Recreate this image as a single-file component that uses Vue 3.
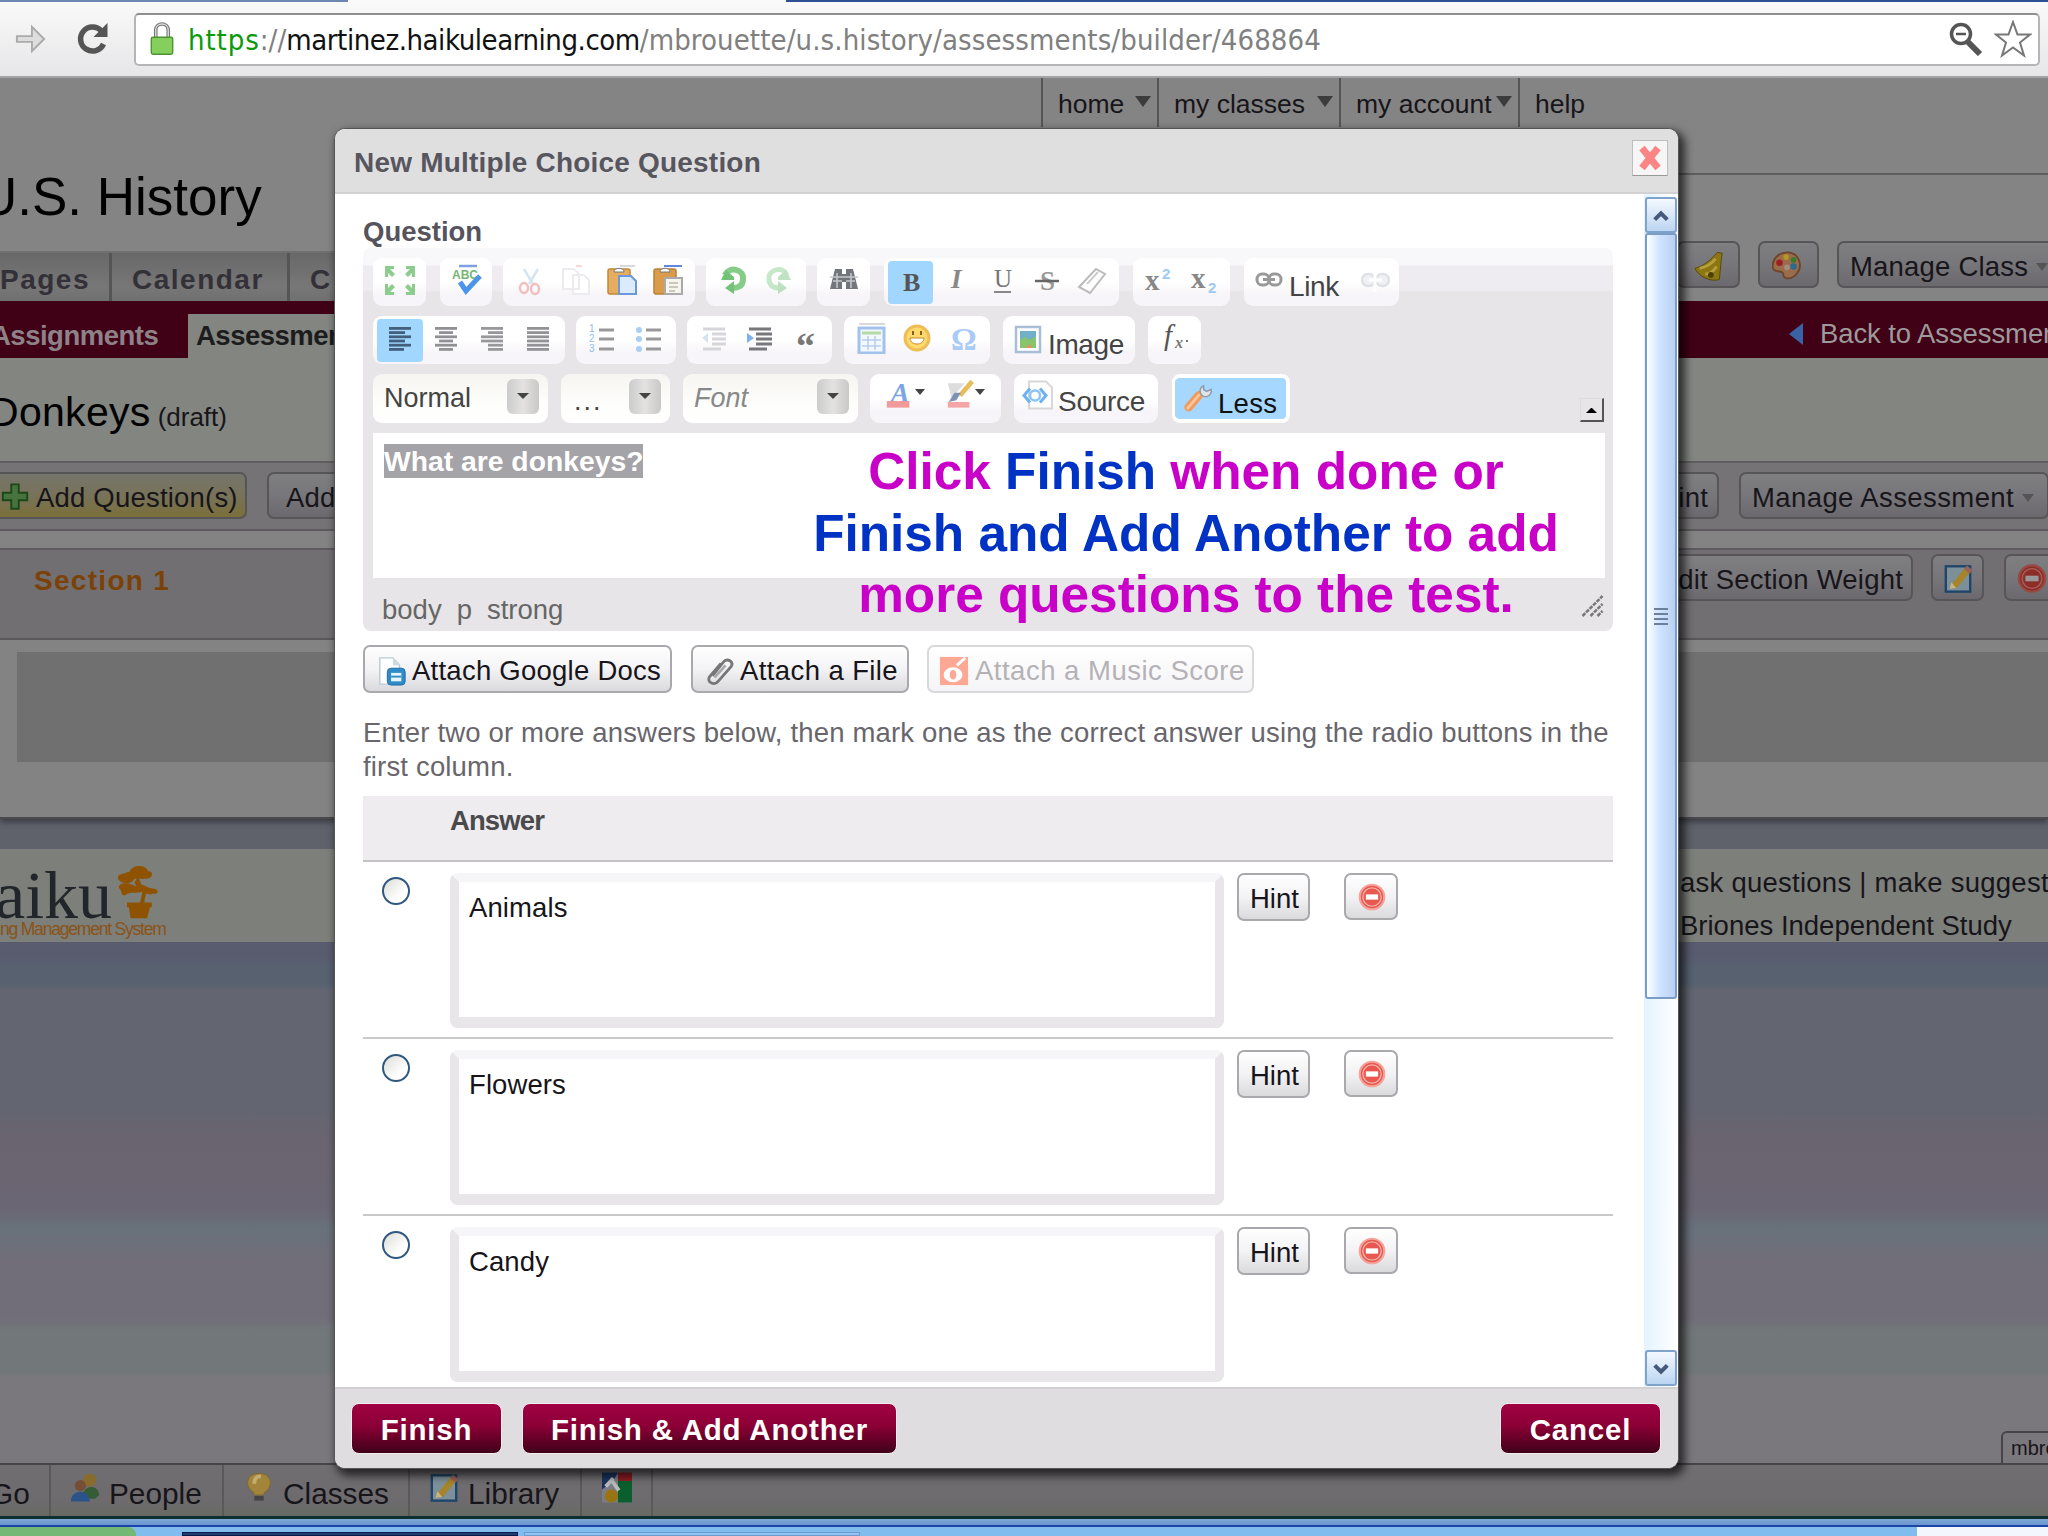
<script setup>
import { ref } from 'vue'

const nav = [
  { label: 'home', menu: true, w: 116 },
  { label: 'my classes', menu: true, w: 182 },
  { label: 'my account', menu: true, w: 179 },
  { label: 'help', menu: false, w: 120 }
]

// w = group width, gap = space after the group
const toolRows = [
  [
    { w: 53, gap: 14, items: ['maximize'] },
    { w: 52, gap: 11, items: ['spell'] },
    { w: 192, gap: 11, items: ['cut', 'copy', 'paste', 'pasteText'] },
    { w: 100, gap: 11, items: ['undo', 'redo'] },
    { w: 53, gap: 14, items: ['find'] },
    { w: 235, gap: 14, items: ['bold', 'italic', 'underline', 'strike', 'eraser'], on: 'bold' },
    { w: 97, gap: 14, items: ['sup', 'sub'] },
    { w: 155, gap: 0, items: ['link', 'unlink'], label: 'Link' }
  ],
  [
    { w: 192, gap: 11, items: ['left', 'center', 'right', 'justify'], on: 'left' },
    { w: 100, gap: 11, items: ['ol', 'ul'] },
    { w: 145, gap: 12, items: ['outdent', 'indent', 'quote'] },
    { w: 146, gap: 13, items: ['table', 'smiley', 'omega'] },
    { w: 132, gap: 13, items: ['image'], label: 'Image' },
    { w: 53, gap: 0, items: ['formula'] }
  ]
]

const selects = [
  { text: 'Normal', w: 175, gap: 13 },
  { text: '...', w: 109, gap: 13, dots: true },
  { text: 'Font', w: 175, gap: 12, italic: true }
]

const answers = ref(['Animals', 'Flowers', 'Candy'])

const lines = (rows) => rows.map(([x, w], i) => `<rect x="${x}" y="${5 + i * 4.2}" width="${w}" height="2.8"/>`).join('')

const icons = {
  maximize: '<g fill="#8ccc8c"><path d="M1 2h9v3H6l5 5-3 3-4-4v4H1zM31 2h-9v3h4l-5 5 3 3 4-4v4h3zM1 31h9v-3H6l5-5-3-3-4 4v-4H1zM31 31h-9v-3h4l-5-5 3-3 4 4v-4h3z"/></g>',
  spell: '<path d="M9 2h18" stroke="#7f9fe0" stroke-width="2.5"/><text x="2" y="15" font-size="12" font-weight="bold" font-family="Liberation Sans" fill="#74b574">ABC</text><path d="M10 18l6 9 14-15" fill="none" stroke="#4b95ea" stroke-width="5"/>',
  cut: '<g fill="none" stroke-width="2.5"><path d="M10 5l9 15M24 5l-9 15" stroke="#d3e6f2"/><ellipse cx="10" cy="24" rx="4" ry="5" stroke="#f2bebe"/><ellipse cx="21" cy="25" rx="4" ry="5" stroke="#f2bebe"/></g>',
  copy: '<g fill="#fff" stroke="#ecebf0" stroke-width="2"><path d="M3 5h11l5 5v15H3zM13 11h11l5 5v14H13z"/></g><path d="M16 2h6" stroke="#f5d7d7" stroke-width="2"/>',
  paste: '<path d="M14 2h15" stroke="#ccc" stroke-width="1.5"/><rect x="2" y="5" width="22" height="25" rx="2" fill="#e5ad60" stroke="#c28737" stroke-width="1.5"/><path d="M8 8c0-5 10-5 10 0z" fill="#fff" stroke="#777"/><path d="M13 12h12l5 5v13H13z" fill="#dbeaff" stroke="#6d98d8" stroke-width="2"/>',
  pasteText: '<path d="M12 2h18" stroke="#6188dc" stroke-width="2"/><rect x="2" y="5" width="22" height="25" rx="2" fill="#d99c4d" stroke="#bb8034" stroke-width="1.5"/><path d="M8 8c0-5 10-5 10 0z" fill="#fff" stroke="#777"/><path d="M13 14h17v16H13z" fill="#f7f6ee" stroke="#aaa" stroke-width="2"/><path d="M17 19h9M17 23h9M17 27h6" stroke="#b9b9b0" stroke-width="1.6"/>',
  undo: '<path d="M8 11c4-9 19-6 18 4 0 7-5 9-10 9" fill="none" stroke="#85cc88" stroke-width="6"/><path d="M4 16h13V13l-8-7zM17 17v13l-9-6z" fill="#74c179"/>',
  redo: '<g opacity=".45"><path d="M24 11c-4-9-19-6-18 4 0 7 5 9 10 9" fill="none" stroke="#85cc88" stroke-width="5"/><path d="M28 16H15V13l8-7zM15 17v13l9-6z" fill="#74c179"/></g>',
  find: '<g fill="#72757c"><path d="M7 5h7v5h4V5h7l5 20h-12v-7h-4v7H2z"/></g><path d="M5 17h9M18 17h9M9 9v15M23 9v15M2 13h28" stroke="#c5c7cc" stroke-width="1.5"/>',
  bold: '<text x="8" y="27" font-size="26" font-weight="bold" font-family="Liberation Serif" fill="#555">B</text>',
  italic: '<text x="11" y="24" font-size="27" font-weight="bold" font-style="italic" font-family="Liberation Serif" fill="#888">I</text>',
  underline: '<text x="8" y="23" font-size="25" font-family="Liberation Serif" fill="#777">U</text><path d="M8 28h17" stroke="#888" stroke-width="2"/>',
  strike: '<text x="9" y="26" font-size="27" font-weight="bold" font-family="Liberation Serif" fill="#999">S</text><path d="M4 17h24" stroke="#666" stroke-width="2.5"/>',
  eraser: '<path d="M3 23L20 5l9 5-15 19z" fill="#fff" stroke="#bbb" stroke-width="2"/><path d="M11 20L22 8" stroke="#ccc" stroke-width="2"/>',
  sup: '<text x="2" y="26" font-size="29" font-weight="bold" font-family="Liberation Serif" fill="#888">x</text><text x="19" y="15" font-size="15" font-weight="bold" font-family="Liberation Sans" fill="#9acbf5">2</text>',
  sub: '<text x="3" y="24" font-size="29" font-weight="bold" font-family="Liberation Serif" fill="#888">x</text><text x="20" y="29" font-size="15" font-weight="bold" font-family="Liberation Sans" fill="#9acbf5">2</text>',
  link: '<g fill="none" stroke="#999" stroke-width="3"><rect x="4" y="10" width="12" height="11" rx="5"/><rect x="16" y="10" width="12" height="11" rx="5"/><path d="M10 15.500h12"/></g>',
  unlink: '<g fill="#f0f1f4" stroke="#dfe1e5" stroke-width="2.5"><rect x="3" y="10" width="13" height="12" rx="6"/><rect x="17" y="10" width="13" height="12" rx="6"/></g><path d="M16 5v23M10 16h13" stroke="#fff" stroke-width="3"/>',
  left: `<g fill="#42607c">${lines([[5, 22], [5, 16], [5, 22], [5, 16], [5, 22], [5, 15]])}</g>`,
  center: `<g fill="#919195">${lines([[5, 22], [9, 14], [5, 22], [9, 14], [5, 22], [9, 14]])}</g>`,
  right: `<g fill="#98989c">${lines([[5, 22], [12, 15], [5, 22], [5, 22], [12, 15], [12, 15]])}</g>`,
  justify: `<g fill="#939397">${lines([[5, 22], [5, 22], [5, 22], [5, 22], [5, 22], [5, 22]])}</g>`,
  ol: '<g stroke="#999" stroke-width="3"><path d="M12 8h15M12 17h15M12 27h15"/></g><g font-size="10" font-family="Liberation Sans" fill="#8ebdf0"><text x="2" y="10">1</text><text x="2" y="20">2</text><text x="2" y="30">3</text></g>',
  ul: '<g stroke="#999" stroke-width="3"><path d="M13 8h15M13 17h15M13 27h15"/></g><g fill="#a9cff5"><circle cx="6" cy="8" r="3"/><circle cx="6" cy="17" r="3"/><circle cx="6" cy="27" r="3"/></g>',
  outdent: '<g stroke="#d6d6da" stroke-width="3"><path d="M5 7h22M14 12h14M14 17h14M14 22h14M5 27h18"/></g><path d="M10 11v10l-6-5z" fill="#d5e2ef"/>',
  indent: '<g stroke="#77777c" stroke-width="3"><path d="M5 7h22M12 12h16M12 17h16M12 22h16M5 27h18"/></g><path d="M3 11v10l7-5z" fill="#7bb3ee"/>',
  quote: '<text x="7" y="37" font-size="38" font-weight="bold" font-family="Liberation Serif" fill="#777">“</text>',
  table: '<path d="M4 2h26" stroke="#ccc" stroke-width="1.5"/><rect x="4" y="6" width="25" height="25" fill="#f3f8ff" stroke="#a2c2ec" stroke-width="3"/><path d="M7 11h19" stroke="#b4dba6" stroke-width="3"/><path d="M7 18h19M7 24h19M13 14v14M20 14v14" stroke="#b9cdea" stroke-width="1.5"/>',
  smiley: '<circle cx="16" cy="16" r="12" fill="#ffd96b" stroke="#eebd58" stroke-width="3"/><path d="M9 16h14c0 8-14 8-14 0z" fill="#fff" stroke="#c08c2c"/><path d="M12 9v4M20 9v4" stroke="#85601f" stroke-width="2"/>',
  omega: '<text x="4" y="28" font-size="32" font-weight="bold" font-family="Liberation Serif" fill="#a9cbf6">Ω</text>',
  image: '<rect x="4" y="5" width="24" height="25" fill="#fff" stroke="#a8bdd6" stroke-width="2.5"/><rect x="8" y="9" width="16" height="17" fill="#87c56d"/><path d="M8 9h16v5l-6 4-5-3-5 3z" fill="#72b0c9"/><path d="M14 26l3-4 3 4z" fill="#ef8c56"/>',
  formula: '<text x="5" y="23" font-size="29" font-style="italic" font-family="Liberation Serif" fill="#555">f</text><text x="16" y="26" font-size="16" font-weight="bold" font-style="italic" font-family="Liberation Serif" fill="#777">x</text><path d="M27 19h2" stroke="#777" stroke-width="2"/>',
  color: '<text x="6" y="24" font-size="30" font-weight="bold" font-style="italic" font-family="Liberation Serif" fill="#7ba5e4">A</text><rect x="2" y="23" width="24" height="7" fill="#f29a9a"/>',
  brush: '<path d="M3 4h18L7 20z" fill="#ddd"/><path d="M29 2L16 17" stroke="#e7bd5c" stroke-width="5"/><path d="M17 14l-5 8-8 2 6-10z" fill="#7d93b5"/><rect x="3" y="24" width="23" height="6" fill="#f4a5a5"/>',
  source: '<path d="M7 2h17l6 6v21H7z" fill="#fff" stroke="#d8d8d8" stroke-width="2"/><path d="M8 9l-6 7 6 7M18 9l6 7-6 7" fill="none" stroke="#6cb1f1" stroke-width="3"/><circle cx="13" cy="16" r="5" fill="none" stroke="#8cc4f7" stroke-width="2.5"/>',
  wrench: '<path d="M17 14L6 27" stroke="#f19a5b" stroke-width="9" stroke-linecap="round"/><path d="M17 14L5 28" stroke="#fbc497" stroke-width="3" stroke-linecap="round"/><path d="M19 13l4-5" stroke="#aab4bd" stroke-width="4"/><path d="M22 4a6 6 0 1 0 8 4l-5 2-3-2z" fill="#dfe5ea" stroke="#8f9ba6" stroke-width="1.5"/>',
  gdoc: '<path d="M3 2h14l7 8v20H3z" fill="#fff" stroke="#b9cbd5" stroke-width="1.5"/><path d="M17 2l7 8h-7z" fill="#cfdbe1"/><rect x="11" y="13" width="19" height="18" rx="4" fill="#2f8bc8" stroke="#1d6ba3"/><path d="M15 18h11v9H15z" fill="#e6f4fd"/><path d="M15 22h11" stroke="#2f8bc8" stroke-width="2"/>',
  clip: '<path d="M8 21L20 6c4-4 11 0 8 5L14 27c-4 5-13 1-9-5L17 8" fill="none" stroke="#777" stroke-width="3"/><path d="M10 23L22 10" stroke="#aaa" stroke-width="3"/>',
  music: '<rect x="1" y="1" width="30" height="30" fill="#fca894"/><ellipse cx="15" cy="20" rx="10" ry="8" fill="#fff"/><ellipse cx="15" cy="20" rx="3.500" ry="5" fill="#fca894"/><path d="M19 10L28 2" stroke="#fff" stroke-width="3"/>',
  minus: '<circle cx="16" cy="16" r="14" fill="#e8584e" stroke="#f3a59d" stroke-width="2.500"/><circle cx="16" cy="16" r="10.500" fill="none" stroke="#f8b1aa" stroke-width="1.500"/><rect x="9" y="13" width="14" height="6" fill="#fff"/>',
  bell: '<path d="M25 2l5 1-1 8-2 20C17 34 4 27 1 19 9 17 17 11 22 5z" fill="#8c7614" stroke="#55470c"/><path d="M6 19c6-1 12-4 17-10M12 25c5 0 9-3 12-8" fill="none" stroke="#b7a03a" stroke-width="3"/><circle cx="18" cy="26" r="3" fill="#4d3f0a"/>',
  palette: '<path d="M16 2c13 0 17 14 11 22-6 8-15 7-15 1 0-4-9-1-11-6C-1 10 7 2 16 2z" fill="#9a6c4c" stroke="#6e442a" stroke-width="2"/><circle cx="8" cy="13" r="3.500" fill="#9c2020"/><circle cx="15" cy="7" r="3" fill="#b09a20"/><circle cx="23" cy="10" r="3" fill="#3b7a2c"/><circle cx="23" cy="17" r="3.500" fill="#2b6a93"/><circle cx="16" cy="18" r="3" fill="#a58c80"/>',
  edit: '<rect x="3" y="3" width="26" height="27" fill="#7d9099" stroke="#1d4469" stroke-width="2.500"/><path d="M26 7L12 24" stroke="#a68429" stroke-width="7"/><path d="M14 26l-7 1 2-7z" fill="#cbb381"/><path d="M24 4l6 5" stroke="#9a6259" stroke-width="5"/>',
  remove: '<circle cx="16" cy="16" r="14" fill="#8e2c28" stroke="#9a4843" stroke-width="2.500"/><circle cx="16" cy="16" r="10.500" fill="none" stroke="#a5625d" stroke-width="1.500"/><rect x="9" y="13" width="14" height="6" fill="#999"/>',
  plus: '<path d="M12 3h8v9h9v8h-9v9h-8v-9H3v-8h9z" fill="#47733f" stroke="#1d4719" stroke-width="2"/>',
  people: '<circle cx="21" cy="8" r="7" fill="#876c2e"/><path d="M13 28c0-16 18-16 18-4l-4 4z" fill="#355c35"/><circle cx="11" cy="14" r="6" fill="#754e37"/><path d="M1 31c0-14 20-14 20 0z" fill="#2a5389"/>',
  bulb: '<path d="M16 1c15 0 15 15 6 20l-1 3H11l-1-3C1 16 1 1 16 1z" fill="#a2853a" stroke="#7d672e"/><path d="M11 12c0-8 5-8 7-8" fill="none" stroke="#c3ad72" stroke-width="4"/><path d="M11 25h10v5H11z" fill="#454545"/>',
  google: '<rect width="32" height="32" fill="#7a7e84"/><path d="M17 0h15v9H17z" fill="#8d1c22"/><path d="M17 9h15v23H17z" fill="#0b5e2e"/><path d="M0 0h17l-5 9-12 9z" fill="#1c355f"/><circle cx="10" cy="25" r="7" fill="#9a7411"/><path d="M10 8l8 11M4 15l8-9" stroke="#bbb" stroke-width="4"/>',
  bonsai: '<g fill="#8f5300"><path d="M15 7c3-8 18-8 20 0 6-1 6 8-2 8H20c-4 9-18 4-18-1 0-4 5-4 7-5z"/><path d="M3 25c0-7 12-6 18-2 8-5 12 3 21 3 5 1 5 7-2 5-4 3-8-1-11-2-6 3-14-1-19 4-6 1-2-5-7-8z"/><path d="M24 12l4 10 6 4-3 13 1 4h-6l3-15-9-8zM12 41h27v5h-2l-3 12H16l-2-12h-2z"/></g>'
}
</script>

<template>
  <div class="screen">
    <header class="browser">
      <div class="tabstrip"><i></i><b></b><i></i></div>
      <div class="toolbar">
        <svg class="fwd" viewBox="0 0 32 34"><path d="M1 14h16V4l13 13-13 13V20H1z" fill="#ddd" stroke="#aaa" stroke-width="2" /></svg>
        <svg class="reload" viewBox="0 0 34 36"><path d="M28 23a12 12 0 1 1-2-13" fill="none" stroke="#555" stroke-width="5.5" /><path d="M32 2v14H18z" fill="#555" /></svg>
        <div class="address">
          <svg class="lock" viewBox="0 0 26 38"><path d="M6 18V9c0-9 14-9 14 0v9" fill="none" stroke="#777" stroke-width="4" /><path d="M6 18V9c0-9 14-9 14 0v9" fill="none" stroke="#ddd" stroke-width="1.5" /><rect x="1" y="17" width="24" height="19" rx="2" fill="#85d05d" stroke="#4c9230" stroke-width="1.5" /></svg>
          <span class="url"><em>https</em>://<strong>martinez.haikulearning.com</strong>/mbrouette/u.s.history/assessments/builder/468864</span>
          <svg class="mag" viewBox="0 0 34 34"><circle cx="12" cy="12" r="9.500" fill="#fff" stroke="#555" stroke-width="3.500" /><path d="M7 12h10" stroke="#555" stroke-width="2.500" /><path d="M19 20l12 12" stroke="#555" stroke-width="6" /></svg>
          <svg class="star" viewBox="0 0 38 38"><path d="M19 2l4.500 12.500H36l-10 8 4 13-11-8-11 8 4-13-10-8h12.500z" fill="#fff" stroke="#777" stroke-width="2" /></svg>
        </div>
      </div>
    </header>

    <main class="page">
      <nav class="topnav">
        <div v-for="n in nav" :key="n.label" class="nav-item" :style="{ width: n.w + 'px' }">
          {{ n.label }}<i v-if="n.menu"></i>
        </div>
      </nav>
      <div class="title-row">
        <h1>U.S. History</h1>
        <div class="rule"></div>
      </div>
      <div class="split tabs-row">
        <div class="tabs"><span class="t1">Pages</span><span class="t2">Calendar</span><span class="t3">C</span></div>
        <div class="right">
          <div class="btn dim bellbtn"><svg viewBox="0 0 32 32" v-html="icons.bell"></svg></div>
          <div class="btn dim palbtn"><svg viewBox="0 0 32 32" v-html="icons.palette"></svg></div>
          <div class="btn dim mclass">Manage Class <i class="caret"></i></div>
        </div>
      </div>
      <div class="split crimson">
        <div class="subtabs"><b>Assignments</b><span>Assessments</span></div>
        <div class="right back"><i></i>Back to Assessments</div>
      </div>
      <div class="heading"><h2>Donkeys</h2><span>(draft)</span></div>
      <div class="split actions">
        <div class="left">
          <div class="btn dim addq"><svg viewBox="0 0 32 32" v-html="icons.plus"></svg>Add Question(s)</div>
          <div class="btn dim adds">Add</div>
        </div>
        <div class="right">
          <div class="btn dim print">Print</div>
          <div class="btn dim massess">Manage Assessment <i class="caret"></i></div>
        </div>
      </div>
      <div class="split section">
        <h3>Section 1</h3>
        <div class="right">
          <div class="btn dim weight">Edit Section Weight</div>
          <div class="btn dim editbtn"><svg viewBox="0 0 32 32" v-html="icons.edit"></svg></div>
          <div class="btn dim delbtn"><svg viewBox="0 0 32 32" v-html="icons.remove"></svg></div>
        </div>
      </div>
      <div class="section-body"><div></div></div>
      <div class="split foot">
        <div class="logo">
          <div class="word">aiku<svg viewBox="0 0 48 60" v-html="icons.bonsai"></svg></div>
          <small>ng Management System</small>
        </div>
        <div class="right links"><p class="ask">ask questions | make suggestions</p><p>Briones Independent Study</p></div>
      </div>
      <div class="spacer"><div class="chat">mbrouette</div></div>
      <div class="dock">
        <div class="d1">Go</div>
        <div class="d2"><svg viewBox="0 0 32 32" v-html="icons.people"></svg>People</div>
        <div class="d3"><svg viewBox="0 0 32 32" v-html="icons.bulb"></svg>Classes</div>
        <div class="d4"><svg viewBox="0 0 32 32" v-html="icons.edit"></svg>Library</div>
        <div class="d5"><svg viewBox="0 0 32 32" v-html="icons.google"></svg></div>
      </div>
    </main>
    <footer class="taskbar"><i class="start"></i><i class="task on"></i><i class="task"></i><i class="tray"></i></footer>

    <section class="modal">
      <div class="modal-head">
        <span>New Multiple Choice Question</span>
        <button class="close"><svg viewBox="0 0 24 28"><path d="M4 4l16 20M20 4L4 24" stroke="#fb8585" stroke-width="7" /></svg></button>
      </div>
      <div class="modal-body">
        <div class="form">
          <label class="q-label">Question</label>
          <div class="editor">
            <div v-for="(row, r) in toolRows" :key="r" class="tool-row">
              <div v-for="(g, i) in row" :key="i" class="group" :class="{ labelled: g.label }" :style="{ width: g.w + 'px', marginRight: g.gap + 'px' }">
                <template v-for="(name, k) in g.items" :key="name">
                  <div class="tool" :class="{ on: g.on === name }"><svg viewBox="0 0 32 32" v-html="icons[name]"></svg></div>
                  <span v-if="g.label && k === 0" class="tool-label">{{ g.label }}</span>
                </template>
              </div>
            </div>
            <div class="tool-row third">
              <div v-for="s in selects" :key="s.text" class="select" :class="{ italic: s.italic, dots: s.dots }" :style="{ width: s.w + 'px', marginRight: s.gap + 'px' }">
                <span>{{ s.text }}</span><div class="drop"><i></i></div>
              </div>
              <div class="group colors">
                <svg viewBox="0 0 32 32" v-html="icons.color"></svg><i></i>
                <svg viewBox="0 0 32 32" v-html="icons.brush"></svg><i></i>
              </div>
              <div class="group source"><svg viewBox="0 0 32 32" v-html="icons.source"></svg><span>Source</span></div>
              <div class="less"><svg viewBox="0 0 32 32" v-html="icons.wrench"></svg><span>Less</span></div>
              <div class="collapse"><i></i></div>
            </div>
            <div class="content"><strong>What are donkeys?</strong></div>
            <div class="path">
              <span>body</span><span>p</span><span>strong</span>
              <svg class="grip" viewBox="0 0 24 24"><path d="M2 22L22 2M10 22L22 10M17 22l5-5" stroke="#777" stroke-width="2.500" stroke-dasharray="4 1" /></svg>
            </div>
          </div>

          <div class="attach">
            <div class="btn a1"><svg viewBox="0 0 32 32" v-html="icons.gdoc"></svg>Attach Google Docs</div>
            <div class="btn a2"><svg viewBox="0 0 32 32" v-html="icons.clip"></svg>Attach a File</div>
            <div class="btn a3"><svg viewBox="0 0 32 32" v-html="icons.music"></svg>Attach a Music Score</div>
          </div>

          <p class="hint-text">Enter two or more answers below, then mark one as the correct answer using the radio buttons in the<br>first column.</p>

          <div class="thead">Answer</div>
          <div v-for="a in answers" :key="a" class="answer">
            <div class="radio"></div>
            <div class="field">{{ a }}</div>
            <div class="btn hint">Hint</div>
            <div class="btn remove"><svg viewBox="0 0 32 32" v-html="icons.minus"></svg></div>
          </div>
        </div>
        <div class="scrollbar">
          <div class="sb-btn"><svg viewBox="0 0 20 20"><path d="M3 14l7-7 7 7" fill="none" stroke="#45597a" stroke-width="4.500" /></svg></div>
          <div class="thumb"><i></i><i></i><i></i><i></i></div>
          <div class="sb-btn down"><svg viewBox="0 0 20 20"><path d="M3 6l7 7 7-7" fill="none" stroke="#45597a" stroke-width="4.500" /></svg></div>
        </div>
      </div>
      <div class="modal-foot">
        <button class="primary f1">Finish</button>
        <button class="primary f2">Finish &amp; Add Another</button>
        <button class="primary f3">Cancel</button>
      </div>
    </section>

    <div class="callout">
      <div>Click <b>Finish</b> when done or</div>
      <div><b>Finish and Add Another</b> to add</div>
      <div>more questions to the test.</div>
    </div>
  </div>
</template>

<style>
body {
  margin: 0;
  overflow: hidden;
}
</style>

<style scoped>
.screen {
  position: relative;
  width: 2048px;
  height: 1536px;
  overflow: hidden;
  font-family: "Liberation Sans", Arial, sans-serif;
  font-size: 27.5px;
  white-space: nowrap;
  color: #17151a;
}

.screen * {
  box-sizing: border-box;
}

svg {
  display: block;
  flex: none;
}

h1, h2, h3, p {
  margin: 0;
  font-weight: normal;
}

/* browser chrome */
.browser {
  height: 78px;
  background: linear-gradient(#fafafa, #e6e6e8);
  border-bottom: 2px solid #a3a3a5;
}

.tabstrip {
  display: flex;
  height: 2px;
}

.tabstrip i {
  width: 348px;
  background: #6d87b4;
}

.tabstrip b {
  width: 438px;
}

.tabstrip i:last-child {
  flex: 1;
  background: #2d5093;
}

.toolbar {
  display: flex;
  align-items: center;
  height: 74px;
  padding: 0 8px 0 15px;
}

.fwd {
  width: 32px;
  height: 32px;
}

.reload {
  width: 35px;
  height: 36px;
  margin: 0 24px 0 28px;
}

.address {
  display: flex;
  flex: 1;
  align-items: center;
  height: 53px;
  padding: 0 6px 0 13px;
  border: 2px solid #b5b5b8;
  border-top-color: #8f8f92;
  border-radius: 5px;
  background: #fff;
}

.lock {
  width: 26px;
  height: 34px;
}

.url {
  flex: 1;
  margin-left: 13px;
  padding-top: 2px;
  font-family: "DejaVu Sans Condensed", "DejaVu Sans", sans-serif;
  font-size: 29px;
  font-stretch: condensed;
  letter-spacing: 0.1px;
  color: #808080;
}

.url em {
  font-style: normal;
  letter-spacing: 0.9px;
  color: #0a9a0a;
}

.url strong {
  font-weight: normal;
  letter-spacing: -0.45px;
  color: #111;
}

.mag {
  width: 34px;
  height: 34px;
  margin-right: 11px;
}

.star {
  width: 38px;
  height: 38px;
}

/* dimmed page */
.page {
  display: flex;
  flex-direction: column;
  height: 1438px;
  background: linear-gradient(#595c68 0, #5f626b 770px, #595b6e 866px, #595c6f 880px, #576170 888px, #576170 906px, #636570 912px, #636570 1030px, #6a6470 1060px, #6b6673 1130px, #68717a 1150px, #716e79 1185px, #716e79 1240px, #727779 1252px, #727779 1295px, #7b787d 1300px);
}

.topnav {
  display: flex;
  height: 49px;
  padding-left: 1041px;
  background: #848484;
  font-size: 26.5px;
}

.nav-item {
  display: flex;
  align-items: center;
  padding: 3px 0 0 15px;
  border-left: 2px solid #555;
}

.nav-item i {
  width: 0;
  margin: -6px 6px 0 auto;
  border: 8px solid transparent;
  border-top: 11px solid #3c3c3c;
  border-bottom: 0;
}

.title-row {
  display: flex;
  justify-content: space-between;
  height: 114px;
  background: #848484;
}

.title-row h1 {
  margin: 39px 0 0 -21px;
  font-size: 53px;
  line-height: 61px;
  color: #000;
}

.rule {
  width: 371px;
  height: 48px;
  border-bottom: 2px solid #5e5e5e;
}

.split {
  display: flex;
  flex: none;
  justify-content: space-between;
}

.right {
  display: flex;
  width: 371px;
  overflow: hidden;
}

.tabs-row {
  height: 60px;
  background: #848484;
}

.tabs {
  display: flex;
  align-items: center;
  width: 400px;
  height: 50px;
  margin-top: 10px;
  border-top: 2px solid #707070;
  background: linear-gradient(#686868, #777 70%, #707070);
  font-size: 28px;
  font-weight: bold;
  letter-spacing: 1.5px;
  color: #333137;
}

.tabs span {
  flex: none;
  height: 48px;
  line-height: 53px;
  border-right: 3px solid #555;
}

.t1 {
  width: 112px;
}

.t2 {
  width: 178px;
  padding-left: 20px;
}

.t3 {
  width: 110px;
  padding-left: 20px;
}

.btn {
  display: flex;
  flex: none;
  align-items: center;
  height: 48px;
  padding-top: 3px;
  border: 2px solid #aaa8ac;
  border-radius: 7px;
  background: linear-gradient(#fff, #f3f2f4 50%, #dad9dc);
}

.dim {
  height: 47px;
  padding-top: 4px;
  border-color: #575558;
  background: linear-gradient(#7f7e81, #77767a 50%, #6b696d);
  letter-spacing: 0.2px;
}

.dim svg {
  width: 30px;
  height: 31px;
  margin-top: -2px;
}

.caret {
  border: 6px solid transparent;
  border-top: 8px solid #555;
  border-bottom: 0;
  margin-left: 8px;
}

.bellbtn {
  width: 63px;
  margin-right: 18px;
  padding-left: 15px;
}

.palbtn {
  width: 61px;
  margin-right: 18px;
  padding-left: 12px;
}

.mclass {
  width: 260px;
  padding-left: 11px;
}

.crimson {
  height: 57px;
  background: #400016;
}

.subtabs {
  display: flex;
  align-items: flex-end;
  width: 400px;
}

.subtabs b {
  flex: none;
  width: 197px;
  height: 57px;
  margin-left: -9px;
  line-height: 69px;
  letter-spacing: -0.5px;
  color: #8d8288;
}

.subtabs span {
  flex: 1;
  height: 44px;
  padding-left: 8px;
  line-height: 43px;
  font-weight: bold;
  letter-spacing: -0.5px;
  background: #828580;
  color: #1d1c1d;
}

.back {
  align-items: center;
  padding-top: 9px;
  letter-spacing: -0.1px;
  color: #9c9a9c;
}

.back i {
  margin: 0 17px 0 112px;
  border: 11px solid transparent;
  border-right: 14px solid #3a62a5;
  border-left: 0;
}

.heading {
  display: flex;
  flex: none;
  align-items: baseline;
  height: 103px;
  padding-top: 31px;
  background: #828580;
}

.heading h2 {
  margin: 0 7px 0 -11px;
  font-size: 41px;
  letter-spacing: 0.3px;
  color: #000;
}

.heading span {
  font-size: 26px;
}

.actions {
  height: 87px;
  padding-top: 9px;
  border-top: 2px solid #5f5d60;
  background: linear-gradient(#757376 0 66px, #5c5a5d 66px 68px, #838383 68px);
}

.left {
  display: flex;
  width: 420px;
}

.addq {
  width: 267px;
  margin: 0 20px 0 -20px;
  padding-left: 18px;
  background: linear-gradient(#76756b, #777257 55%, #7b6f3a);
}

.addq svg {
  margin-right: 6px;
}

.adds {
  width: 200px;
  padding-left: 17px;
}

.print {
  width: 80px;
  margin: 0 20px 0 -38px;
  justify-content: flex-end;
  padding-right: 9px;
}

.massess {
  width: 310px;
  padding-left: 11px;
  letter-spacing: 0.4px;
}

.section {
  height: 92px;
  padding-top: 4px;
  border-top: 2px solid #5c5a5d;
  border-bottom: 2px solid #5f5c60;
  background: #726f73;
}

.section h3 {
  margin: 11px 0 0 34px;
  font-size: 28px;
  font-weight: bold;
  letter-spacing: 1.3px;
  color: #7b4208;
}

.weight {
  width: 270px;
  margin: 0 18px 0 -34px;
  padding-right: 8px;
  justify-content: flex-end;
}

.editbtn {
  width: 53px;
  margin-right: 20px;
  padding-left: 10px;
}

.delbtn {
  width: 70px;
  padding-left: 11px;
}

.section-body {
  flex: none;
  height: 179px;
  padding: 12px 0 12px 17px;
  border-bottom: 2px solid #484a4e;
  background: #838383;
  box-shadow: 0 3px 6px rgba(0, 0, 0, 0.4);
}

.section-body div {
  height: 110px;
  background: #707070;
}

.foot {
  height: 93px;
  margin-top: 30px;
  background: #7d7f7a;
}

.word {
  display: flex;
  height: 70px;
  margin-left: -5px;
  font-family: "Liberation Serif", serif;
  font-size: 68px;
  line-height: 92px;
  color: #20262a;
}

.word svg {
  width: 50px;
  height: 55px;
  margin: 16px 0 0 1px;
}

.logo small {
  display: block;
  font-size: 17.5px;
  line-height: 20px;
  letter-spacing: -1.2px;
  color: #8a5317;
}

.links {
  flex-direction: column;
  padding: 20px 0 0 3px;
}

.links p {
  flex: none;
  height: 43px;
  line-height: 27px;
}

.ask {
  letter-spacing: 0.25px;
}

.spacer {
  flex: 1;
  display: flex;
  justify-content: flex-end;
  align-items: flex-end;
  border-bottom: 2px solid #464447;
}

.chat {
  width: 47px;
  height: 32px;
  padding-left: 8px;
  overflow: hidden;
  font-size: 20px;
  line-height: 30px;
  border: 2px solid #464447;
  border-width: 2px 0 0 2px;
  border-radius: 6px 0 0 0;
}

.dock {
  display: flex;
  height: 51px;
  font-size: 29.8px;
  background: linear-gradient(#716e72, #6d6b6e 70%, #676b64);
}

.dock div {
  display: flex;
  align-items: center;
  padding-top: 6px;
  border-right: 2px solid #5a585b;
}

.dock svg {
  width: 30px;
  height: 31px;
  margin: -12px 9px 0 0;
}

.dock .d1 { width: 61px; margin-left: -10px; }
.dock .d2 { width: 173px; padding-left: 19px; }
.dock .d3 { width: 186px; padding-left: 20px; }
.dock .d4 { width: 172px; padding-left: 19px; }
.dock .d5 { width: 71px; padding-left: 20px; }

.taskbar {
  display: flex;
  height: 20px;
  align-items: flex-end;
  border-top: 3px solid #10302f;
  background: linear-gradient(#7fa9d8 0, #6a94cf 6px, #1c44a4 6px, #1c44a4 8px, #80bdee 8px);
}

.start {
  width: 136px;
  height: 9px;
  border-radius: 0 8px 0 0;
  background: #73b874;
}

.task {
  width: 336px;
  height: 4px;
  margin-left: 6px;
  background: #8cc5f6;
  border: 1px solid #6f99cf;
}

.task.on {
  margin-left: 46px;
  background: #1f3d72;
  border-color: #0a1a4a;
}

.tray {
  width: 131px;
  height: 9px;
  margin-left: auto;
  background: #f3f6fc;
}

/* dialog */
.modal {
  position: absolute;
  left: 334px;
  top: 128px;
  width: 1345px;
  height: 1341px;
  display: flex;
  flex-direction: column;
  overflow: hidden;
  border: 1px solid #555;
  border-radius: 11px;
  background: #fff;
  box-shadow: 4px 5px 8px 2px rgba(0, 0, 0, 0.65);
}

.modal-head {
  display: flex;
  justify-content: space-between;
  height: 65px;
  padding: 0 10px 0 19px;
  border-bottom: 2px solid #d2d1d3;
  background: #dfdfe0;
  font-size: 28px;
  font-weight: bold;
  letter-spacing: 0.2px;
  line-height: 68px;
  color: #57565e;
}

.close {
  width: 36px;
  height: 36px;
  margin-top: 11px;
  padding: 3px 5px;
  border: 1px solid #c0bfc0;
  border-bottom-color: #999;
  background: #f7f6f7;
}

.close svg {
  width: 24px;
  height: 28px;
}

.modal-body {
  display: flex;
  height: 1193px;
}

.form {
  width: 1309px;
  padding: 21px 0 0 28px;
  overflow: hidden;
}

.q-label {
  display: block;
  height: 33px;
  line-height: 33px;
  font-weight: bold;
  color: #55535b;
}

.editor {
  width: 1250px;
  height: 383px;
  padding: 10px 8px 0 10px;
  border-radius: 8px;
  background: linear-gradient(#f8f7fa 0 17px, #eeecf0 18px 42px, #e7e5e8 44px);
}

.tool-row {
  display: flex;
  height: 48px;
  margin-bottom: 10px;
}

.third {
  height: 49px;
  margin-bottom: 0;
}

.group {
  display: flex;
  flex: none;
  align-items: center;
  padding: 0 4px;
  border-radius: 9px;
  background: linear-gradient(#fff, #fff 50%, #f7f5f9 75%);
}

.tool {
  display: flex;
  flex: 1;
  align-items: center;
  justify-content: center;
  height: 43px;
  border-radius: 4px;
}

.tool svg {
  width: 32px;
  height: 32px;
  margin-top: -5px;
}

.tool.on {
  background: #a1d6ff;
}

.labelled .tool {
  flex: none;
  width: 41px;
}

.tool-label {
  flex: 1;
  padding-top: 9px;
  font-size: 28px;
  letter-spacing: -0.4px;
  color: #444;
}

.select {
  display: flex;
  justify-content: space-between;
  height: 49px;
  padding: 5px 9px 0 11px;
  border-radius: 9px;
  background: linear-gradient(#f6f5f1, #fdfdfb 60%, #fff);
  line-height: 39px;
  font-size: 27px;
  color: #444;
}

.italic {
  font-style: italic;
  color: #888;
}

.dots span {
  padding: 3px 0 0 2px;
  letter-spacing: 2px;
}

.drop {
  width: 32px;
  height: 35px;
  padding: 14px 10px;
  border-radius: 6px;
  background: linear-gradient(90deg, #ccc, #e3e2e1 50%, #c9c8c7);
}

.drop i,
.colors i {
  display: block;
  border: 6px solid transparent;
  border-top: 6px solid #444;
  border-bottom: 0;
}

.colors {
  width: 131px;
  margin-right: 13px;
  padding: 0 0 8px 15px;
}

.colors i {
  border-width: 6px 5px 0;
  margin: -6px 20px 0 0;
}

.colors svg {
  width: 30px;
  height: 31px;
}

.source {
  width: 144px;
  margin-right: 14px;
  padding-left: 8px;
}

.source svg {
  width: 32px;
  height: 33px;
  margin-top: -6px;
}

.source span {
  padding: 7px 0 0 4px;
  font-size: 28px;
  letter-spacing: -0.3px;
  color: #444;
}

.less {
  display: flex;
  width: 118px;
  padding-left: 8px;
  border: 4px solid #fff;
  border-left-width: 3px;
  border-radius: 8px;
  background: #a5d7ff;
  color: #111;
}

.less svg {
  width: 30px;
  height: 32px;
  margin-top: 3px;
}

.less span {
  padding-left: 5px;
  line-height: 51px;
  letter-spacing: 0.3px;
}

.collapse {
  width: 24px;
  height: 24px;
  margin: 24px 1px 0 auto;
  padding: 9px 5px;
  border: 1px solid #ddd;
  border-right: 2px solid #555;
  border-bottom: 2px solid #555;
}

.collapse i {
  display: block;
  border: 5px solid transparent;
  border-bottom: 5px solid #000;
  border-top: 0;
}

.content {
  height: 145px;
  margin-top: 10px;
  padding: 11px;
  background: #fff;
}

.content strong {
  display: inline-block;
  height: 34px;
  line-height: 34px;
  font-size: 28.3px;
  background: #a4a3a8;
  color: #fff;
}

.path {
  display: flex;
  gap: 15px;
  padding: 16px 0 0 9px;
  color: #666;
}

.grip {
  width: 25px;
  height: 24px;
  margin-left: auto;
}

.attach {
  display: flex;
  margin-top: 14px;
  letter-spacing: 0.25px;
}

.attach svg {
  width: 30px;
  height: 32px;
}

.a1 { width: 309px; margin-right: 19px; padding-left: 12px; }
.a1 svg { margin-right: 5px; }
.a2 { width: 218px; margin-right: 18px; padding-left: 12px; letter-spacing: 0.4px; }
.a2 svg { margin-right: 5px; }
.a3 { width: 327px; padding-left: 10px; color: #b4b2b6; border-color: #d9d8da; background: linear-gradient(#fff, #f5f4f6); letter-spacing: 0.5px; }
.a3 svg { margin-right: 6px; }

.hint-text {
  margin-top: 23px;
  height: 80px;
  line-height: 34px;
  letter-spacing: 0.17px;
  color: #68666c;
}

.thead {
  width: 1250px;
  height: 66px;
  padding-left: 87px;
  border-bottom: 2px solid #c4c2c5;
  background: #eeecef;
  font-weight: bold;
  line-height: 49px;
  letter-spacing: -0.9px;
  color: #4a494c;
}

.answer {
  display: flex;
  width: 1250px;
  height: 177px;
  padding-top: 11px;
  border-bottom: 2px solid #c9c8ca;
}

.radio {
  width: 28px;
  height: 28px;
  margin: 4px 40px 0 19px;
  border: 2.5px solid #31597f;
  border-radius: 50%;
  background: linear-gradient(135deg, #dcdcd8, #fff 70%);
}

.field {
  width: 774px;
  height: 155px;
  padding: 11px 10px;
  border: 9px solid #e8e6e9;
  border-top-color: #f6f5f8;
  border-bottom-width: 11px;
  border-radius: 8px;
  line-height: 30px;
  letter-spacing: 0.1px;
  background: #fff;
}

.hint {
  width: 73px;
  margin-left: 13px;
  padding-left: 11px;
}

.remove {
  width: 54px;
  height: 47px;
  margin-left: 34px;
  padding: 0 0 0 12px;
}

.remove svg {
  width: 28px;
  height: 28px;
}

.scrollbar {
  display: flex;
  flex-direction: column;
  width: 34px;
  padding: 3px 1px 1px;
  background: linear-gradient(90deg, #e3f3ff, #fff);
}

.sb-btn {
  height: 36px;
  padding: 7px 5px;
  border: 2px solid #7fa3cb;
  border-radius: 3px;
  background: linear-gradient(#f4f9ff, #bcd5f2);
}

.sb-btn svg {
  width: 18px;
  height: 20px;
}

.thumb {
  height: 766px;
  display: flex;
  flex-direction: column;
  align-items: center;
  justify-content: center;
  gap: 3px;
  border: 2px solid #7b9dc5;
  border-radius: 3px;
  background: linear-gradient(90deg, #fff, #cfe4ff 45%, #b9d0f2);
}

.thumb i {
  width: 14px;
  height: 2px;
  background: #6a8299;
}

.down {
  margin-top: auto;
}

.modal-foot {
  display: flex;
  flex: 1;
  padding: 14px 17px 0 16px;
  border-top: 2px solid #d2d1d3;
  background: #dfdde0;
}

.primary {
  height: 51px;
  padding: 3px 0 0;
  border: 1px solid #f3edf0;
  border-radius: 8px;
  background: linear-gradient(#a00042, #8b0036 45%, #3f0018);
  font: bold 29.5px "Liberation Sans", Arial, sans-serif;
  letter-spacing: 0.8px;
  color: #fff;
}

.f1 { width: 151px; margin-right: 20px; }
.f2 { width: 375px; }
.f3 { width: 161px; margin-left: auto; }

/* instructions laid over the dialog */
.callout {
  position: absolute;
  left: 786px;
  top: 441px;
  width: 800px;
  text-align: center;
  font-size: 51.3px;
  font-weight: bold;
  line-height: 61.5px;
  color: #c800c8;
}

.callout b {
  color: #0033c4;
}
</style>
